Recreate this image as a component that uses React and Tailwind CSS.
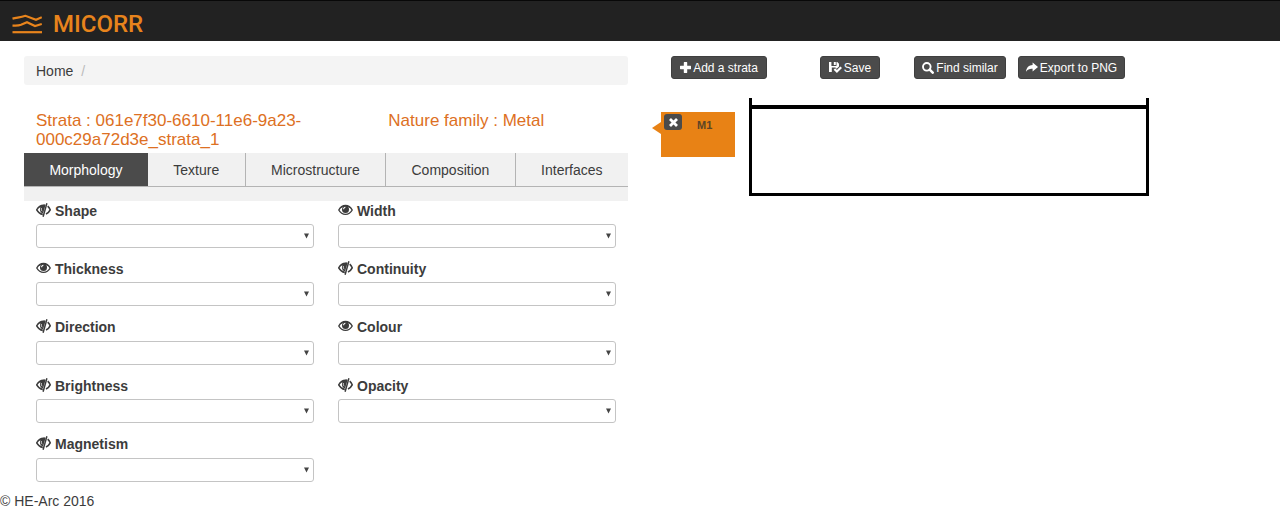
import React from "react";

const TABS = ["Morphology", "Texture", "Microstructure", "Composition", "Interfaces"];

const FIELDS = [
  { name: "Shape", visible: false },
  { name: "Width", visible: true },
  { name: "Thickness", visible: true },
  { name: "Continuity", visible: false },
  { name: "Direction", visible: false },
  { name: "Colour", visible: true },
  { name: "Brightness", visible: false },
  { name: "Opacity", visible: false },
  { name: "Magnetism", visible: false },
];

function LogoMark() {
  return (
    <svg className="h-5 w-[30px]" viewBox="0 0 30 20" fill="none" stroke="#e8841c" strokeWidth="2.2" aria-hidden="true">
      <path d="M0.5 4.6 C5 3.4 8 3.6 13.5 1.8 L24 5.8 L29.8 3.2" />
      <path d="M0.5 11.6 C4 11.6 6 12 9 10.8 L15 8.2 L23 12 L29.8 10" />
      <path d="M0.5 18.2 H30" />
    </svg>
  );
}

function EyeOpen() {
  return (
    <svg className="mb-[2px] h-3 w-[15px] shrink-0" viewBox="0 0 15 12" aria-hidden="true">
      <path d="M0.8 6 C4 -0.2 11 -0.2 14.2 6 C11 11.8 4 11.8 0.8 6 Z" fill="none" stroke="currentColor" strokeWidth="1.4" />
      <path d="M1.6 4.6 C4.4 0.4 10.6 0.4 13.4 4.6 L10.8 3.6 C9 2.6 6 2.6 4.2 3.6 Z" fill="currentColor" />
      <circle cx="7.5" cy="5.4" r="3.5" fill="currentColor" />
      <path d="M5.6 5.3 C5.6 4 6.4 3.3 7.4 3.3" fill="none" stroke="#fff" strokeWidth="1.1" />
    </svg>
  );
}

function EyeClosed() {
  return (
    <svg className="mb-[2px] h-[14px] w-[15px] shrink-0" viewBox="0 0 15 14" aria-hidden="true">
      <path d="M9.2 2.3 C5.2 1.6 2.4 3.7 0.7 6.8 C2 9.2 4 10.9 6.8 11.5" fill="none" stroke="currentColor" strokeWidth="1.5" />
      <path d="M2.2 4.7 C4.2 2.2 6.7 1.4 9.6 1.9 L7 10.4 C4 9.6 3.4 6.4 4.4 4.2 Z" fill="currentColor" />
      <path d="M5.4 5 C5.1 6.3 5.4 7.4 6.2 8.2" fill="none" stroke="#fff" strokeWidth="0.8" />
      <path d="M10.2 0 L11.6 0.4 L7.8 14 L6.4 13.6 Z" fill="currentColor" />
      <path d="M11.7 3.1 C12.8 4.1 13.6 5.3 14.2 6.8 C13.3 8.7 12 10 10 11" fill="none" stroke="currentColor" strokeWidth="1.6" />
    </svg>
  );
}

function PlusIcon() {
  return (
    <svg className="size-[11px]" viewBox="0 0 11 11" fill="currentColor" aria-hidden="true">
      <path d="M4.2 0 H6.8 Q7.2 0 7.2 .4 V3.8 H10.6 Q11 3.8 11 4.2 V6.8 Q11 7.2 10.6 7.2 H7.2 V10.6 Q7.2 11 6.8 11 H4.2 Q3.8 11 3.8 10.6 V7.2 H.4 Q0 7.2 0 6.8 V4.2 Q0 3.8 .4 3.8 H3.8 V.4 Q3.8 0 4.2 0 Z" />
    </svg>
  );
}

function SaveIcon() {
  return (
    <svg className="h-[11px] w-[13px]" viewBox="0 0 13 11" fill="currentColor" aria-hidden="true">
      <path d="M0 0 H2.4 V4 H7.5 V0 H8.3 L10 1.7 V4.4 L7.6 6.8 L6.4 5.6 H2.8 V10 H0 Z" />
      <path d="M4.8 0 H6.8 V3 H4.8 Z" />
      <path d="M4.6 7.8 L6.2 6.3 L7.9 8 L11.4 4.4 L13 5.9 L7.9 11 Z" />
    </svg>
  );
}

function SearchIcon() {
  return (
    <svg className="size-3" viewBox="0 0 12 12" fill="none" stroke="currentColor" aria-hidden="true">
      <circle cx="4.8" cy="4.8" r="3.8" strokeWidth="1.9" />
      <path d="M7.7 7.7 L10.7 10.7" strokeWidth="2.5" strokeLinecap="round" />
    </svg>
  );
}

function ShareIcon() {
  return (
    <svg className="h-[11px] w-3" viewBox="0 0 12 11" fill="currentColor" aria-hidden="true">
      <path d="M6.6 .4 L12 5 L6.6 9.4 V6.8 C3.8 6.6 1.8 7.2 0 9.8 C.4 5.4 3 3.2 6.6 3 Z" />
    </svg>
  );
}

function RemoveIcon() {
  return (
    <svg className="size-[9px]" viewBox="0 0 9 9" stroke="currentColor" strokeWidth="2.8" aria-hidden="true">
      <path d="M1 1 L8 8 M8 1 L1 8" />
    </svg>
  );
}

function ToolButton({ icon, label, className }) {
  return (
    <button
      type="button"
      className={`flex h-[23px] items-center justify-center gap-[2px] rounded-[3px] border border-[#3f3f3f] bg-[#4b4b4b] text-[12px] whitespace-nowrap text-white ${className}`}
    >
      {icon}
      {label}
    </button>
  );
}

function Field({ name, visible }) {
  const id = name.toLowerCase();
  return (
    <div className="px-3">
      <label htmlFor={id} className="flex h-[19px] items-center gap-1 font-bold">
        {visible ? <EyeOpen /> : <EyeClosed />}
        {name}
      </label>
      <div className="relative mt-1">
        <select id={id} className="block h-6 w-full appearance-none rounded-[3px] border border-[#c4c4c4] bg-white px-2">
          <option value=""></option>
        </select>
        <svg className="pointer-events-none absolute top-[9px] right-[5px] h-[6px] w-[5px]" viewBox="0 0 5 6" fill="#444" aria-hidden="true">
          <path d="M0 .5 H5 L2.5 5.5 Z" />
        </svg>
      </div>
    </div>
  );
}

export default function App() {
  return (
    <div className="bg-white font-['Liberation_Sans',Arial,sans-serif] text-[14px] leading-5 text-[#3c3c3c]">
      <header className="flex h-[41px] items-center border-t border-[#080808] bg-[#222] px-3 pt-[6px]">
        <a href="#" className="flex items-center gap-[11px] text-[#e8841c]">
          <LogoMark />
          <span className="font-[Roboto,sans-serif] text-[24px] leading-7 font-medium">MICORR</span>
        </a>
      </header>

      <main className="grid grid-cols-2 px-3 pt-[15px]">
        <section className="px-3">
          <nav aria-label="Breadcrumb" className="flex h-[29px] items-center gap-2 rounded-[3px] bg-[#f4f4f4] px-3">
            <a href="#">Home</a>
            <span className="text-[#bbb]">/</span>
          </nav>

          <div className="mt-[26px] flex text-[17px] leading-[19px] text-[#dd7023]">
            <h4 className="w-7/12 px-3 wrap-anywhere">
              Strata : 061e7f30-6610-11e6-9a23-
              <wbr />
              000c29a72d3e_strata_1
            </h4>
            <h4 className="w-5/12 px-3">Nature family : Metal</h4>
          </div>

          <div className="mt-1 bg-[#f1f1f1] pb-[14px]">
            <div role="tablist" className="flex border-b border-[#b4b4b4]">
              {TABS.map((tab, i) => (
                <button
                  key={tab}
                  type="button"
                  role="tab"
                  aria-selected={i === 0}
                  className={
                    i === 0
                      ? "h-[33px] grow bg-[#4b4b4b] px-6 text-white"
                      : "h-[33px] grow border-l border-[#b4b4b4] px-6 nth-2:border-l-0"
                  }
                >
                  {tab}
                </button>
              ))}
            </div>
          </div>

          <div className="grid min-h-[292px] grid-cols-2 grid-rows-5">
            {FIELDS.map((f) => (
              <Field key={f.name} {...f} />
            ))}
          </div>
        </section>

        <section className="px-3">
          <div className="flex pl-[19px]">
            <ToolButton icon={<PlusIcon />} label="Add a strata" className="w-24" />
            <ToolButton icon={<SaveIcon />} label="Save" className="ml-[53px] w-[60px]" />
            <ToolButton icon={<SearchIcon />} label="Find similar" className="ml-[34px] w-[92px]" />
            <ToolButton icon={<ShareIcon />} label="Export to PNG" className="ml-3 w-[107px]" />
          </div>

          <div className="mt-[19px] flex items-start">
            <div className="mt-[14px] flex items-start">
              <svg className="mt-[10px] h-3 w-[9px]" viewBox="0 0 9 12" fill="#e88215" aria-hidden="true">
                <path d="M9 0 V12 L0 6 Z" />
              </svg>
              <div className="flex h-[45px] w-[74px] items-start gap-[15px] bg-[#e88215] pt-[2px] pl-[3px]">
                <button
                  type="button"
                  aria-label="Remove strata"
                  className="flex h-4 w-[18px] items-center justify-center rounded-[3px] bg-[#4b4b4b] text-white"
                >
                  <RemoveIcon />
                </button>
                <span className="pt-1 text-[11px] leading-[14px] font-bold text-[#5c4526]">M1</span>
              </div>
            </div>
            <div className="ml-[14px] h-[98px] w-[400px] border-x-3 border-b-3 border-black pt-[7px]">
              <div className="h-1 bg-black" />
            </div>
          </div>
        </section>
      </main>

      <footer className="-mt-[2px]">© HE-Arc 2016</footer>
    </div>
  );
}
